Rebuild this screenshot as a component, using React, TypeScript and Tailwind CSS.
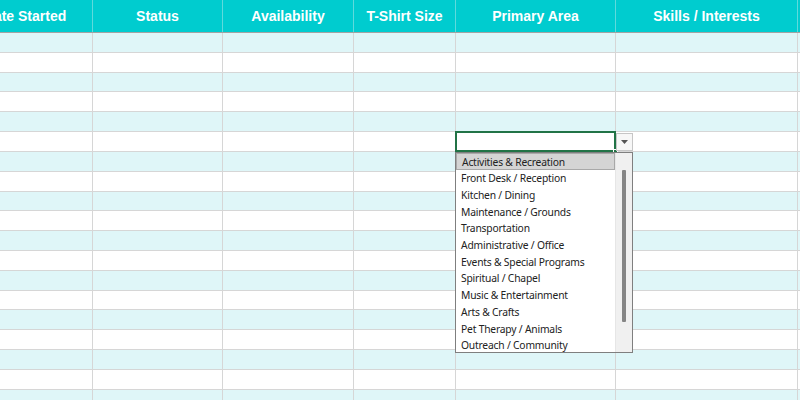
import React from "react";

const cols = [
  { label: "Date Started", w: "w-[135px] ml-[-42px]" },
  { label: "Status", w: "w-[130px]" },
  { label: "Availability", w: "w-[131px]" },
  { label: "T-Shirt Size", w: "w-[102px]" },
  { label: "Primary Area", w: "w-[160px]" },
  { label: "Skills / Interests", w: "w-[182px]" },
  { label: "", w: "w-[80px]" },
];

const items = [
  "Activities & Recreation",
  "Front Desk / Reception",
  "Kitchen / Dining",
  "Maintenance / Grounds",
  "Transportation",
  "Administrative / Office",
  "Events & Special Programs",
  "Spiritual / Chapel",
  "Music & Entertainment",
  "Arts & Crafts",
  "Pet Therapy / Animals",
  "Outreach / Community",
];

export default function App() {
  const rows = Array.from({ length: 19 }, (_, i) => i);
  return (
    <div className="relative w-[800px] h-[400px] overflow-hidden bg-white" style={{ fontFamily: '"Liberation Sans", Arial, sans-serif' }}>
      <div className="flex h-[33px] bg-[#00cccf] border-b border-[#a3a3a3]">
        {cols.map((c, i) => (
          <div key={i} className={`${c.w} shrink-0 flex items-center justify-center border-r border-[#5fdadc] text-white font-bold text-[14px] whitespace-nowrap`}>
            {c.label}
          </div>
        ))}
      </div>
      {rows.map((r) => (
        <div key={r} className={`flex h-[19.82px] border-b border-[#d6d6d6] ${r % 2 === 0 ? "bg-[#dff6f8]" : "bg-white"}`}>
          {cols.map((c, i) => (
            <div key={i} className={`${c.w} shrink-0 border-r border-[#d6d6d6]`} />
          ))}
        </div>
      ))}

      {/* active cell */}
      <div className="absolute left-[455px] top-[131px] w-[161px] h-[21px] border-2 border-[#217346]" />
      <div className="absolute left-[613px] top-[149px] w-[5px] h-[5px] bg-[#217346] border border-white" />

      {/* dropdown button */}
      <div className="absolute left-[616px] top-[133px] w-[17px] h-[18px] border border-[#c6c6c6] bg-[#f7f7f7] flex items-center justify-center">
        <svg width="7" height="4" viewBox="0 0 7 4"><path d="M0 0h7L3.5 4z" fill="#555" /></svg>
      </div>

      {/* list */}
      <div className="absolute left-[455px] top-[152px] w-[178px] h-[201px] border border-[#7f7f7f] bg-white flex" style={{ fontFamily: '"Noto Sans", "Open Sans", sans-serif' }}>
        <div className="flex-1 flex flex-col">
          {items.map((t, i) => (
            <div key={t} className={`h-[16.7px] shrink-0 flex items-center pt-[2px] pl-[5px] text-[10.3px] tracking-[-0.2px] text-[#222] whitespace-nowrap ${i === 0 ? "bg-[#d4d4d4] border border-[#a8a8a8] pl-[4px]" : ""}`}>
              {t}
            </div>
          ))}
        </div>
        <div className="w-[17px] bg-[#f0f0f0] border-l border-[#e6e6e6] flex justify-center pt-[17px]">
          <div className="w-[4px] h-[152px] bg-[#858585] rounded-[1px]" />
        </div>
      </div>
    </div>
  );
}
